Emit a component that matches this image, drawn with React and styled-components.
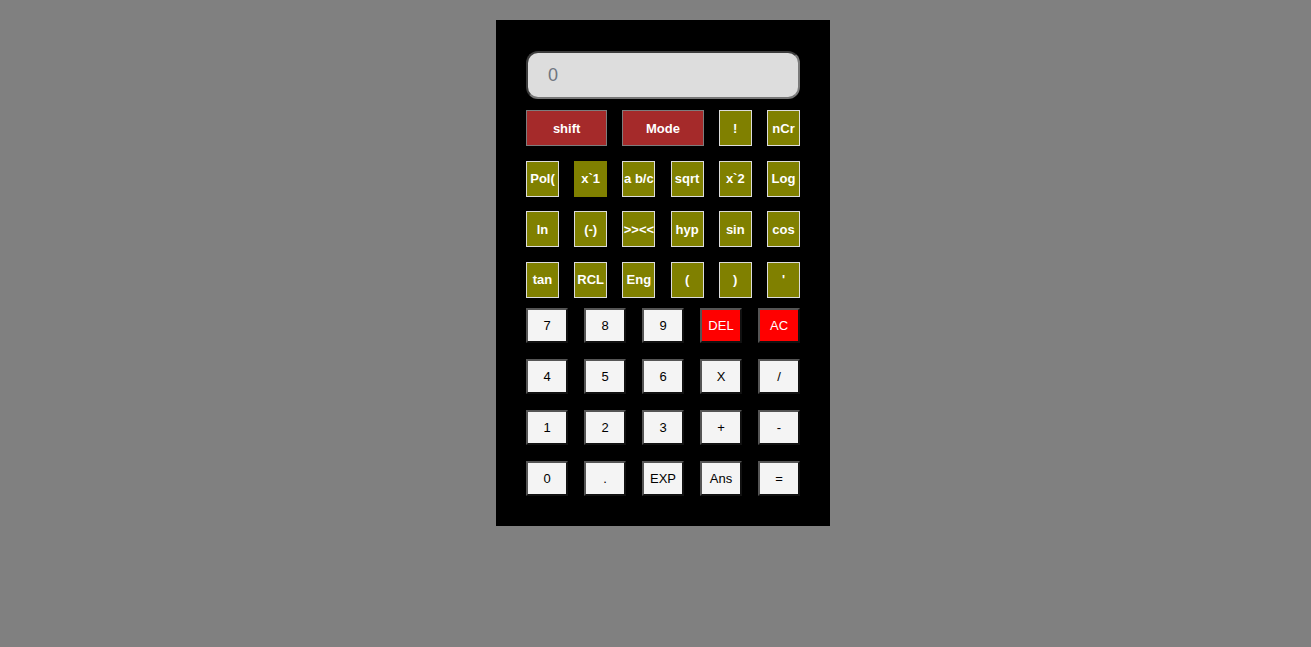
import React from "react";
import styled, { createGlobalStyle, css } from "styled-components";

const GlobalStyle = createGlobalStyle`
  html, body {
    margin: 0;
    padding: 0;
    background: #808080;
    font-family: "Liberation Sans", Arial, sans-serif;
  }
`;

const Page = styled.div`
  display: flex;
  justify-content: center;
  align-items: flex-start;
  padding: 20px 0 0 15px;
  min-height: 627px;
`;

const Calculator = styled.div`
  width: 334px;
  box-sizing: border-box;
  background: #000;
  padding: 31px 30px 30px;
`;

const Display = styled.input`
  display: block;
  width: 100%;
  height: 48px;
  box-sizing: border-box;
  margin: 0;
  padding: 0 20px;
  border-width: 2px;
  border-style: solid;
  border-color: #3c3c3c #7a7a7a #767676 #3c3c3c;
  border-radius: 12px;
  background: #dddddd;
  font-family: "Liberation Sans", Arial, sans-serif;
  font-size: 18px;
  color: #333;
  outline: none;

  &::placeholder {
    color: #6f7580;
  }
`;

const FunctionGrid = styled.div`
  display: grid;
  grid-template-columns: repeat(6, 1fr);
  grid-auto-rows: 36px;
  column-gap: 15.2px;
  row-gap: 14.67px;
  margin-top: 11px;
`;

const FnButton = styled.button`
  grid-column: span ${(p) => p.$span || 1};
  margin: 0;
  padding: 0;
  box-sizing: border-box;
  font-family: "Liberation Sans", Arial, sans-serif;
  font-size: 13px;
  font-weight: bold;
  color: #fff;
  white-space: nowrap;
  overflow: visible;
  cursor: pointer;
  background: #808000;
  border: 1px solid #dcdcdc;

  ${(p) =>
    p.$variant === "mode" &&
    css`
      background: #a52a2a;
      border-color: #7d7d7d;
    `}

  ${(p) =>
    p.$plain &&
    css`
      border-color: #808000;
    `}
`;

const NumberGrid = styled.div`
  display: grid;
  grid-template-columns: repeat(5, 42px);
  justify-content: space-between;
  grid-auto-rows: 35px;
  row-gap: 16px;
  margin-top: 10px;
`;

const NumButton = styled.button`
  margin: 0;
  padding: 0;
  box-sizing: border-box;
  font-family: "Liberation Sans", Arial, sans-serif;
  font-size: 13px;
  font-weight: normal;
  cursor: pointer;
  border-width: 2px;
  border-style: solid;
  border-color: #555 #111 #111 #555;
  background: #f4f4f4;
  color: #000;

  ${(p) =>
    p.$danger &&
    css`
      background: #ff0000;
      color: #fff;
    `}
`;

const functionKeys = [
  { label: "shift", variant: "mode", span: 2 },
  { label: "Mode", variant: "mode", span: 2 },
  { label: "!" },
  { label: "nCr" },
  { label: "Pol(" },
  { label: "x`1", plain: true },
  { label: "a b/c" },
  { label: "sqrt" },
  { label: "x`2" },
  { label: "Log" },
  { label: "ln" },
  { label: "(-)" },
  { label: ">><<" },
  { label: "hyp" },
  { label: "sin" },
  { label: "cos" },
  { label: "tan" },
  { label: "RCL" },
  { label: "Eng" },
  { label: "(" },
  { label: ")" },
  { label: "'" },
];

const numberKeys = [
  { label: "7" },
  { label: "8" },
  { label: "9" },
  { label: "DEL", danger: true },
  { label: "AC", danger: true },
  { label: "4" },
  { label: "5" },
  { label: "6" },
  { label: "X" },
  { label: "/" },
  { label: "1" },
  { label: "2" },
  { label: "3" },
  { label: "+" },
  { label: "-" },
  { label: "0" },
  { label: "." },
  { label: "EXP" },
  { label: "Ans" },
  { label: "=" },
];

export default function App() {
  return (
    <>
      <GlobalStyle />
      <Page>
        <Calculator>
          <Display type="text" placeholder="0" readOnly />
          <FunctionGrid>
            {functionKeys.map((k) => (
              <FnButton
                key={k.label}
                $variant={k.variant}
                $span={k.span}
                $plain={k.plain}
              >
                {k.label}
              </FnButton>
            ))}
          </FunctionGrid>
          <NumberGrid>
            {numberKeys.map((k) => (
              <NumButton key={k.label} $danger={k.danger}>
                {k.label}
              </NumButton>
            ))}
          </NumberGrid>
        </Calculator>
      </Page>
    </>
  );
}
